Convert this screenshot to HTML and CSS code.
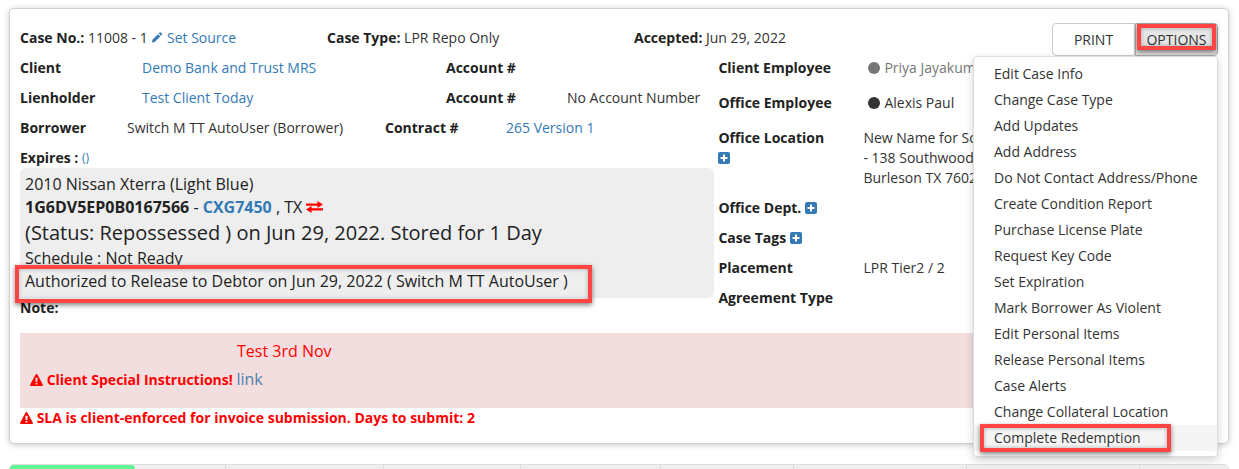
FILE: index.html
```html
<!DOCTYPE html>
<html lang="en">
<head>
<meta charset="utf-8">
<title>Case 11008</title>
<link rel="stylesheet" href="styles.css">
</head>
<body>
<section class="card">
  <div class="toprow">
    <div class="top-a"><b>Case No.:</b> 11008 - 1 <a class="src"><svg class="pencil" viewBox="0 0 12 12"><path d="M8.6 1.1a.8.8 0 0 1 1.1 0l1.200 1.200a.8.8 0 0 1 0 1.100l-.9.9-2.300-2.300zM7 2.700 9.300 5l-5.600 5.600L1 11l.4-2.700z"/></svg> Set Source</a></div>
    <div class="top-b"><b>Case Type:</b> LPR Repo Only</div>
    <div class="top-c"><b>Accepted:</b> Jun 29, 2022</div>
    <div class="btns"><button class="btn">PRINT</button><button class="btn opt">OPTIONS</button></div>
  </div>
  <div class="main">
    <div class="left">
      <div class="row"><b class="l1">Client</b><a class="v1">Demo Bank and Trust MRS</a><b class="l2">Account #</b></div>
      <div class="row"><b class="l1">Lienholder</b><a class="v1">Test Client Today</a><b class="l2">Account #</b><span class="v2">No Account Number</span></div>
      <div class="row"><b class="l1b">Borrower</b><span class="v1b">Switch M TT AutoUser (Borrower)</span><b class="l2b">Contract #</b><a>265 Version 1</a></div>
      <div class="row exp"><b>Expires :</b>&nbsp;<a class="small">()</a></div>
      <div class="vehicle">
        <div>2010 Nissan Xterra (Light Blue)</div>
        <div class="vin"><b>1G6DV5EP0B0167566</b> - <a><b>CXG7450</b></a> , TX <svg class="swap" viewBox="0 0 17 12"><path d="M0 2.500h11.500V0L17 3.500 11.500 7V4.700H0zM17 7.300H5.500V5L0 8.500 5.500 12V9.500H17z"/></svg></div>
        <div class="status">(Status: Repossessed ) on Jun 29, 2022. Stored for 1 Day</div>
        <div class="sched">Schedule : Not Ready</div>
        <div class="auth">Authorized to Release to Debtor on Jun 29, 2022 ( Switch M TT AutoUser )</div>
      </div>
    </div>
    <div class="right">
      <div class="rrow h35"><b class="rl">Client Employee</b><span class="emp gray"><i class="dot d1"></i>Priya Jayakumar</span></div>
      <div class="rrow h35"><b class="rl">Office Employee</b><span class="emp"><i class="dot d2"></i>Alexis Paul</span></div>
      <div class="rrow h70"><div class="rl"><b>Office Location</b><svg class="plus block" viewBox="0 0 12 12"><use href="#p"/></svg></div><span class="addr">New Name for South Office<br>- 138 Southwood Dr<br>Burleson TX 76028</span></div>
      <div class="rrow h30"><b>Office Dept.</b>&nbsp;<svg class="plus" viewBox="0 0 12 12"><use href="#p"/></svg></div>
      <div class="rrow h30"><b>Case Tags</b>&nbsp;<svg class="plus" viewBox="0 0 12 12"><use href="#p"/></svg></div>
      <div class="rrow h30"><b class="rl">Placement</b><span>LPR Tier2 / 2</span></div>
      <div class="rrow h30"><b>Agreement Type</b></div>
    </div>
  </div>
  <div class="note"><b>Note:</b></div>
  <div class="alert">
    <div class="test">Test 3rd Nov</div>
    <div class="csi"><svg class="warn" viewBox="0 0 12 11"><path fill-rule="evenodd" d="M6 0a.9.9 0 0 1 .8.5l5 9.100a.9.9 0 0 1-.8 1.400H1a.9.9 0 0 1-.8-1.400l5-9.100A.9.9 0 0 1 6 0zM5 3.400l.2 4h1.600l.2-4zM5.100 8.200v1.500h1.800V8.200z"/></svg> <b>Client Special Instructions!</b> <a class="lnk">link</a></div>
  </div>
  <div class="sla"><svg class="warn" viewBox="0 0 12 11"><path fill-rule="evenodd" d="M6 0a.9.9 0 0 1 .8.5l5 9.100a.9.9 0 0 1-.8 1.400H1a.9.9 0 0 1-.8-1.400l5-9.100A.9.9 0 0 1 6 0zM5 3.400l.2 4h1.600l.2-4zM5.100 8.200v1.500h1.800V8.200z"/></svg> <b>SLA is client-enforced for invoice submission. Days to submit: 2</b></div>
</section>
<nav class="tabs">
  <span class="tab on"></span><span class="tab t2"></span><span class="tab t3"></span><span class="tab t4"></span><span class="tab t5"></span><span class="tab t6"></span><span class="tab t7"></span><span class="tab t8"></span><span class="tab t9"></span>
</nav>
<ul class="menu">
  <li>Edit Case Info</li><li>Change Case Type</li><li>Add Updates</li><li>Add Address</li><li>Do Not Contact Address/Phone</li><li>Create Condition Report</li><li>Purchase License Plate</li><li>Request Key Code</li><li>Set Expiration</li><li>Mark Borrower As Violent</li><li>Edit Personal Items</li><li>Release Personal Items</li><li>Case Alerts</li><li>Change Collateral Location</li><li class="hover">Complete Redemption</li>
</ul>
<div class="mark m-opt"></div>
<div class="mark m-auth"></div>
<div class="mark m-red"></div>
<svg class="defs" width="0" height="0"><defs><g id="p"><path fill-rule="evenodd" d="M2 0h8a2 2 0 0 1 2 2v8a2 2 0 0 1-2 2H2a2 2 0 0 1-2-2V2a2 2 0 0 1 2-2zM5 2.500V5H2.500v2H5v2.500h2V7h2.500V5H7V2.500z"/></g></defs></svg>
</body>
</html>
```
FILE: styles.css
```css
* { box-sizing: border-box; }
html, body { margin: 0; height: 469px; overflow: hidden; }
body { background: #fff; font: 14px/20px "Open Sans", sans-serif; color: #333; padding: 8px 10px 0 9px; position: relative; }
a { color: #337ab7; }
b { color: #222; font-weight: 700; }
a b { color: inherit; }
.card { height: 436px; background: #fff; border: 1px solid #d0d0d0; border-radius: 5px; box-shadow: 0 1px 6px rgba(0,0,0,.2); padding: 14px 10px 0; }
.toprow { display: flex; height: 30px; align-items: center; position: relative; }
.top-a { width: 307px; }
.top-b { width: 307px; }
.top-c { flex: 1; }
.src .pencil { width: 12px; height: 13px; fill: #337ab7; vertical-align: -1px; }
.btns { display: flex; margin-top: 3px; }
.btn { height: 33px; font: 14px "Open Sans", sans-serif; color: #333; background: #fff; border: 1px solid #ccc; border-radius: 4px 0 0 4px; width: 83px; padding: 0; }
.opt { background: #e6e6e6; border-color: #adadad; border-radius: 0 4px 4px 0; }
.main { display: flex; }
.left { width: 699px; }
.row { height: 30px; display: flex; align-items: center; white-space: nowrap; }
.l1 { width: 122px; }
.v1 { width: 304px; }
.l2 { width: 121px; }
.l1b { width: 107px; }
.v1b { width: 258px; }
.l2b { width: 121px; }
.exp { height: 25px; padding-top: 5px; }
.small { font-size: 12px; }
.vehicle { background: #eee; border-radius: 6px; width: 694px; height: 130px; padding: 6px 5px 0; color: #222; font-size: 16px; line-height: 20px; }
.vin { line-height: 26px; height: 26px; }
.status { font-size: 20px; line-height: 26px; height: 26px; }
.sched { margin-top: 2px; }
.vehicle .auth { margin-top: 3px; }
.swap { width: 17px; height: 12px; fill: #f00; }
.right { width: 500px; }
.rrow { display: flex; align-items: flex-start; white-space: nowrap; padding-top: 5px; }
.h35 { height: 35px; }
.h70 { height: 70px; }
.h30 { height: 30px; }
.rl { width: 145px; }
.rrow .rl + .emp { margin-left: 5px; }
.emp { display: flex; align-items: center; }
.gray { color: #777; }
.dot { width: 12px; height: 12px; border-radius: 50%; margin-right: 4px; }
.d1 { background: #777; }
.d2 { background: #333; }
.plus { width: 12px; height: 12px; fill: #337ab7; margin-top: 4px; }
.plus.block { display: block; }
.note { height: 35px; margin-top: -15px; }
.alert { height: 75px; background: #f2dede; padding: 8px 10px; width: 1197px; }
.test { font-size: 16px; line-height: 20px; color: #f00; padding-left: 207px; }
.csi { margin-top: 8px; color: #f00; }
.csi b, .sla b { color: #f00; }
.lnk { font-size: 16px; color: #4f7fae; }
.warn { width: 13px; height: 12px; fill: #f00; vertical-align: -1px; }
.sla { color: #f00; }
.tabs { display: flex; margin-top: 20px; height: 10px; background: #eee; border: 1px solid #ddd; border-radius: 5px 5px 0 0; }
.tab { border-right: 1px solid #ddd; height: 10px; }
.on { width: 125px; background: #5ff596; border-radius: 4px 4px 0 0; border: 0; }
.t2 { width: 91px; }
.t3 { width: 158px; }
.t4 { width: 137px; }
.t5 { width: 140px; }
.t6 { width: 133px; }
.t7 { width: 173px; }
.t8 { width: 173px; }
.t9 { flex: 1; border: 0; }
.menu { position: absolute; left: 973px; top: 56px; width: 245px; height: 401px; margin: 0; padding: 4px 0; list-style: none; background: #fff; border: 1px solid #ddd; border-radius: 4px; box-shadow: 0 3px 8px rgba(0,0,0,.18); font-size: 14px; color: #333; }
.menu li { height: 26px; line-height: 26px; padding-left: 20px; white-space: nowrap; }
.menu .hover { background: #f5f5f5; }
.mark { position: absolute; border: 4px solid #f44; box-shadow: 0 2px 5px rgba(0,0,0,.5), inset 0 0 4px rgba(0,0,0,.3); }
.m-opt { left: 1137px; top: 24px; width: 79px; height: 26px; }
.m-auth { left: 15px; top: 265px; width: 577px; height: 38px; }
.m-red { left: 980px; top: 424px; width: 191px; height: 28px; }
.defs { position: absolute; }
```
